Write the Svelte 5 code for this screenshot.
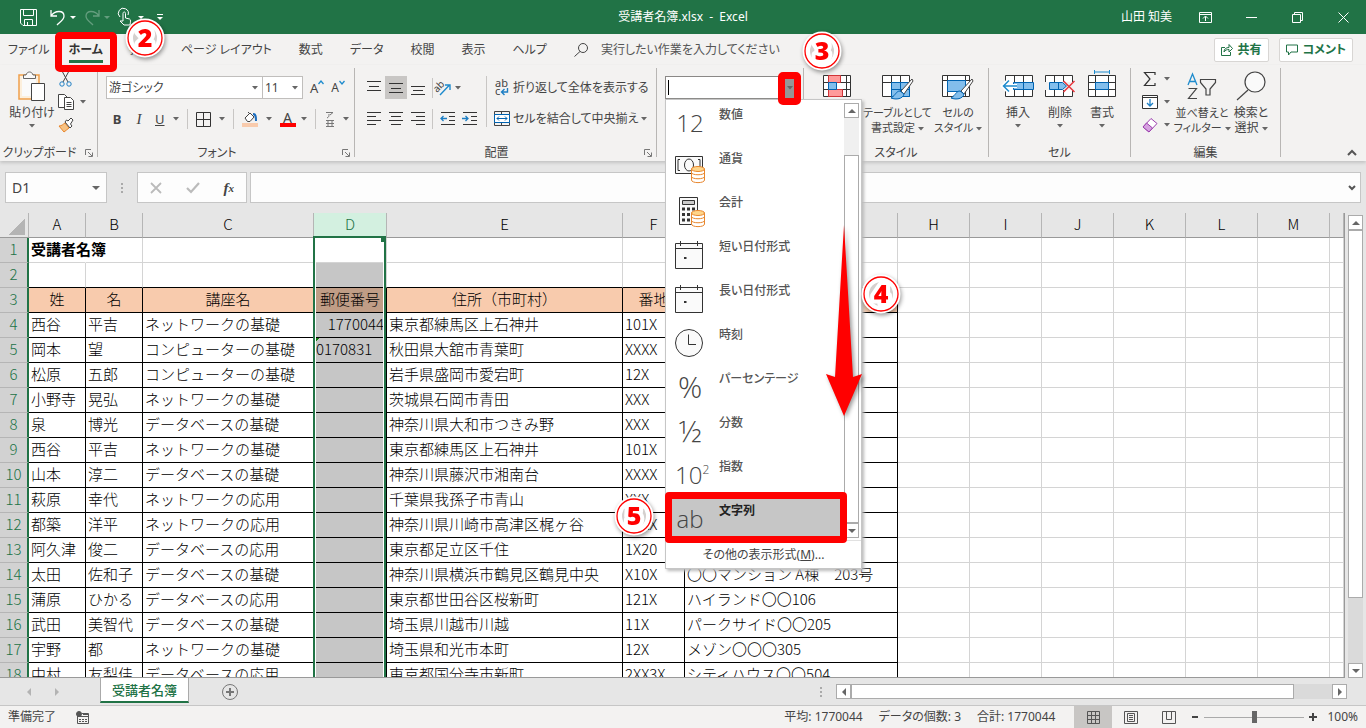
<script lang="ts">
	const tabs = ['ファイル', 'ホーム', '挿入', 'ページ レイアウト', '数式', 'データ', '校閲', '表示', 'ヘルプ'];

	// the last column has no width and takes what is left of the window
	const columns = [
		{ name: 'A', width: 57 },
		{ name: 'B', width: 57 },
		{ name: 'C', width: 171 },
		{ name: 'D', width: 73 },
		{ name: 'E', width: 236 },
		{ name: 'F', width: 62 },
		{ name: 'G', width: 213 },
		...['H', 'I', 'J', 'K', 'L', 'M'].map((name) => ({ name, width: 72 })),
		{ name: '', width: 0 }
	];

	const rows = [
		['受講者名簿'],
		[],
		['姓', '名', '講座名', '郵便番号', '住所（市町村）', '番地', ''],
		['西谷', '平吉', 'ネットワークの基礎', '1770044', '東京都練馬区上石神井', '101X', ''],
		['岡本', '望', 'コンピューターの基礎', '0170831', '秋田県大舘市青葉町', 'XXXX', ''],
		['松原', '五郎', 'コンピューターの基礎', '', '岩手県盛岡市愛宕町', '12X', ''],
		['小野寺', '晃弘', 'ネットワークの基礎', '', '茨城県石岡市青田', 'XXX', ''],
		['泉', '博光', 'データベースの基礎', '', '神奈川県大和市つきみ野', 'XXX', ''],
		['西谷', '平吉', 'ネットワークの基礎', '', '東京都練馬区上石神井', '101X', ''],
		['山本', '淳二', 'データベースの基礎', '', '神奈川県藤沢市湘南台', 'XXXX', ''],
		['萩原', '幸代', 'ネットワークの応用', '', '千葉県我孫子市青山', 'XXX', ''],
		['都築', '洋平', 'ネットワークの応用', '', '神奈川県川崎市高津区梶ヶ谷', 'XXXX', ''],
		['阿久津', '俊二', 'データベースの応用', '', '東京都足立区千住', '1X20', ''],
		['太田', '佐和子', 'データベースの基礎', '', '神奈川県横浜市鶴見区鶴見中央', 'X10X', '〇〇マンション A棟　203号'],
		['蒲原', 'ひかる', 'データベースの応用', '', '東京都世田谷区桜新町', '121X', 'ハイランド〇〇106'],
		['武田', '美智代', 'データベースの基礎', '', '埼玉県川越市川越', '11X', 'パークサイド〇〇205'],
		['宇野', '都', 'ネットワークの基礎', '', '埼玉県和光市本町', '12X', 'メゾン〇〇〇305'],
		['中村', '友梨佳', 'データベースの応用', '', '東京都国分寺市新町', '2XX3X', 'シティハウス〇〇504']
	];

	const formats = [
		{ label: '数値', icon: 'number' },
		{ label: '通貨', icon: 'currency' },
		{ label: '会計', icon: 'accounting' },
		{ label: '短い日付形式', icon: 'date' },
		{ label: '長い日付形式', icon: 'date' },
		{ label: '時刻', icon: 'time' },
		{ label: 'パーセンテージ', icon: 'percent' },
		{ label: '分数', icon: 'fraction' },
		{ label: '指数', icon: 'exponent' },
		{ label: '文字列', icon: 'text' }
	];
</script>

{#snippet caret()}
	<svg class="caret" width="6" height="4" viewBox="0 0 6 4"><path d="M0 0h6L3 3.5z" fill="#666" /></svg>
{/snippet}

{#snippet lines(a, b, c, d)}
	<svg width="14" height="14" viewBox="0 0 14 14" stroke="#333" fill="none"><path d={`${a}${b}${c}${d}`} /></svg>
{/snippet}

{#snippet launcher()}
	<button class="launcher" aria-label="詳細">
		<svg width="8" height="8" viewBox="0 0 8 8" stroke="#777" fill="none"><path d="M.5 6V.5H6M3 3l4 4M7.5 3.5v4h-4" /></svg>
	</button>
{/snippet}

{#snippet coins()}
	<g stroke="#e8862c" fill="#fff">
		<path d="M16.5 16v11c0 3.500 13 3.500 13 0V16z" />
		<path d="M16.500 19.500c0 3 13 3 13 0M16.500 23.500c0 3 13 3 13 0" fill="none" />
		<ellipse cx="23" cy="16" rx="6.500" ry="2.500" fill="#ffd58a" />
	</g>
{/snippet}

{#snippet badge(n, cls)}
	<svg class="badge {cls}" width="44" height="44" viewBox="0 0 44 44">
		<circle cx="22" cy="22" r="19.500" fill="#fff" />
		<circle cx="22" cy="22" r="12" fill="#d4d0ce" />
		<circle cx="22" cy="22" r="17" fill="none" stroke="#f00" stroke-width="1.300" />
		<text x="22" y="31" text-anchor="middle">{n}</text>
	</svg>
{/snippet}

{#snippet brush()}
	<path d="M30 8L19 20l3 3L31 10z" fill="#fff" stroke="#444" />
	<path d="M18 20c-4 0-4 4-9 7 5 2 12 1 13-4z" fill="#83beec" stroke="#0063b1" />
{/snippet}

<div class="excel">
	<header class="titlebar">
		<div class="quick">
			<button class="save" aria-label="上書き保存">
				<svg width="17" height="17" viewBox="0 0 17 17" stroke="#fff" fill="none"><path d="M.5.5h16v16H3l-2.500-2.500zM3.500.5v6h10v-6M4.500 16.500v-6h8v6M7.500 13v3.500" /></svg>
			</button>
			<button class="undo" aria-label="元に戻す">
				<svg width="16" height="17" viewBox="0 0 16 17" stroke="#fff" stroke-width="1.300" fill="none"><path d="M1 1v6h6M1 7c4-6 13-6 13 0 0 4-4 6-7 9" /></svg>
				<i></i>
			</button>
			<button class="undo faded" aria-label="やり直し">
				<svg width="16" height="17" viewBox="0 0 16 17" stroke="#fff" stroke-width="1.300" fill="none"><path d="M15 1v6H9M15 7C11 1 2 1 2 7c0 4 4 6 7 9" /></svg>
				<i></i>
			</button>
			<button class="undo" aria-label="タッチ/マウス モードの切り替え">
				<svg width="16" height="17" viewBox="0 0 16 17" stroke="#fff" fill="none"><path d="M2 8a5 5 0 1 1 8-2M5 12V4.500c0-2 2.500-2 2.500 0V9l4 1c1.500.5 1 3 .5 6H6l-4-4z" /></svg>
				<i></i>
			</button>
			<button class="more" aria-label="クイック アクセス ツール バーのユーザー設定"><i></i></button>
		</div>
		<div class="title">受講者名簿.xlsx&nbsp; -&nbsp; Excel</div>
		<div class="window">
			<span>山田 知美</span>
			<button aria-label="リボンの表示オプション">
				<svg width="13" height="11" viewBox="0 0 13 11" stroke="#fff" fill="none"><path d="M.5.5h12v10H.5zM.5 2.500h12M6.500 9V4.500M4 6.500l2.500-2.500L9 6.500" /></svg>
			</button>
			<button aria-label="最小化"><svg width="11" height="11" viewBox="0 0 11 11" stroke="#fff"><path d="M0 5.500h11" /></svg></button>
			<button aria-label="元に戻す (縮小)"><svg width="11" height="11" viewBox="0 0 11 11" stroke="#fff" fill="none"><path d="M.5 2.500h8v8h-8zM2.500 2.500v-2h8v8h-2" /></svg></button>
			<button aria-label="閉じる"><svg width="11" height="11" viewBox="0 0 11 11" stroke="#fff"><path d="M.5.5l10 10M10.500.5l-10 10" /></svg></button>
		</div>
	</header>

	<nav class="tabs">
		{#each tabs as tab, i}
			<button class="tab" class:active={i === 1}>{tab}</button>
		{/each}
		<label class="tellme">
			<svg width="15" height="15" viewBox="0 0 15 15" stroke="#444" fill="none"><circle cx="9" cy="6" r="4.500" /><path d="M6 9.500L.5 14.500" /></svg>
			<input type="text" placeholder="実行したい作業を入力してください" aria-label="操作アシスト" />
		</label>
		<button class="pill">
			<svg width="12" height="12" viewBox="0 0 12 12" stroke="#217346" fill="none"><path d="M4 3.500H.5v8h9V8M3 8c0-3 2-4.500 5-4.500v-3l3.500 4L8 8V5.500C6 5.500 4 6 3 8z" /></svg>
			共有
		</button>
		<button class="pill">
			<svg width="12" height="12" viewBox="0 0 12 12" stroke="#217346" fill="none"><path d="M.5 1h11v7H5l-2.500 3V8h-2z" /></svg>
			コメント
		</button>
	</nav>

	<div class="ribbon">
		<section class="group clipboard">
			<div class="body">
				<button class="big paste">
					<svg width="28" height="30" viewBox="0 0 28 30" fill="none"><path d="M1 4h20v24H1z" fill="#fcefdc" stroke="#f0a04b" stroke-width="1.500" /><path d="M4 6h14v19H4z" fill="#fafafa" /><path d="M5.500 7.500V4H8c1-4 6-4 7 0h2.500v3.500z" fill="#fafafa" stroke="#666" /><path d="M13.500 12.500h13v17h-13z" fill="#fff" stroke="#444" /></svg>
					<span>貼り付け</span>
					{@render caret()}
				</button>
				<div class="stack">
					<button aria-label="切り取り"><svg width="16" height="16" viewBox="0 0 16 16" fill="none"><path d="M4 0l6 11M11 0L5 11" stroke="#444" /><circle cx="4" cy="13" r="2.200" stroke="#1e7fc4" /><circle cx="11" cy="13" r="2.200" stroke="#1e7fc4" /></svg></button>
					<button aria-label="コピー"><svg width="16" height="16" viewBox="0 0 16 16" stroke="#444" fill="#fff"><path d="M.5.5h6l3 3v10h-9z" /><path d="M6.500 3.500h6l3 3v9h-9zM8.500 8.500h5M8.500 10.500h5M8.500 12.500h5" /></svg>{@render caret()}</button>
					<button aria-label="書式のコピー/貼り付け"><svg width="16" height="16" viewBox="0 0 16 16"><path d="M1 9c3 0 4-2 6-3l4 5c-2 1-3 3-5 4z" fill="#f7c283" stroke="#e8862c" /><path d="M7 5l5 6 2-2-1.500-2L15 3l-2-2-3 3-1.500-1z" fill="#fff" stroke="#444" /></svg></button>
				</div>
			</div>
			<footer>クリップボード {@render launcher()}</footer>
		</section>

		<section class="group font">
			<div class="body column">
				<div class="line">
					<label class="combo name"><select aria-label="フォント"><option>游ゴシック</option></select>{@render caret()}</label>
					<label class="combo size"><select aria-label="フォント サイズ"><option>11</option></select>{@render caret()}</label>
					<button class="grow" aria-label="フォント サイズの拡大">A<svg width="6" height="5" viewBox="0 0 6 5" stroke="#1e8bcd" stroke-width="1.300" fill="none"><path d="M.5 4L3 1l2.500 3" /></svg></button>
					<button class="grow small" aria-label="フォント サイズの縮小">A<svg width="6" height="5" viewBox="0 0 6 5" stroke="#1e8bcd" stroke-width="1.300" fill="none"><path d="M.5 1L3 4l2.500-3" /></svg></button>
				</div>
				<div class="line styles">
					<button class="bold">B</button>
					<button class="italic">I</button>
					<button class="drop"><u>U</u>{@render caret()}</button>
					<hr />
					<button class="drop" aria-label="罫線"><svg width="15" height="15" viewBox="0 0 15 15" stroke="#333" fill="none"><path d="M.5.5h14v14H.5zM7.500 0v15M0 7.500h15" /></svg>{@render caret()}</button>
					<hr />
					<button class="drop" aria-label="塗りつぶしの色"><svg width="16" height="16" viewBox="0 0 16 16" fill="none"><path d="M0 12h16v4H0z" fill="#f8cbad" /><path d="M3 7l5-5 4 4-4 4.500H5.500zM6 1l2 2" stroke="#444" fill="#fff" /><path d="M11 3c3 0 3 3 3 7" stroke="#1e6fc0" stroke-width="2" /></svg>{@render caret()}</button>
					<button class="drop color"><span>A</span>{@render caret()}</button>
					<hr />
					<button class="drop ruby" aria-label="ふりがなの表示/非表示"><svg width="11" height="17" viewBox="0 0 11 17" stroke="#777" fill="none"><path d="M2 1.500h7L6 4M5 3c0 2 0 3-2 4M2 9.500h8M2 12.500h8M2 15.500h8M4 9v7M8 9v7" /></svg>{@render caret()}</button>
				</div>
			</div>
			<footer>フォント {@render launcher()}</footer>
		</section>

		<section class="group align">
			<div class="body">
				<div class="aligns">
					<div class="line">
						<button aria-label="上揃え">{@render lines('M0 .5h14', 'M2 5.500h10', 'M0 9.500h14', '')}</button>
						<button class="on" aria-label="上下中央揃え">{@render lines('M0 2.500h14', 'M2 7.500h10', 'M0 11.500h14', '')}</button>
						<button aria-label="下揃え">{@render lines('M0 5.500h14', 'M2 9.500h10', 'M0 13.500h14', '')}</button>
						<hr />
						<button class="orient" aria-label="方向"><svg width="17" height="16" viewBox="0 0 17 16" fill="none"><text x="0" y="10" font-size="10" fill="#444" transform="rotate(-45 5 8)">ab</text><path d="M6 15L15.500 5M11 5h5v5" stroke="#1e8bcd" stroke-width="1.400" /></svg>{@render caret()}</button>
					</div>
					<div class="line">
						<button aria-label="左揃え">{@render lines('M0 .5h14', 'M0 4.500h9', 'M0 8.500h14', 'M0 12.500h9')}</button>
						<button aria-label="中央揃え">{@render lines('M0 .5h14', 'M2 4.500h10', 'M0 8.500h14', 'M2 12.500h10')}</button>
						<button aria-label="右揃え">{@render lines('M0 .5h14', 'M5 4.500h9', 'M0 8.500h14', 'M5 12.500h9')}</button>
						<hr />
						<button aria-label="インデントを減らす"><svg width="15" height="14" viewBox="0 0 15 14" fill="none"><path d="M1 .5h14M9 4.500h6M9 8.500h6M1 12.500h14" stroke="#333" /><path d="M7 6.500H1M3.500 4L1 6.500 3.500 9" stroke="#1e7fc4" stroke-width="1.300" /></svg></button>
						<button aria-label="インデントを増やす"><svg width="15" height="14" viewBox="0 0 15 14" fill="none"><path d="M1 .5h14M9 4.500h6M9 8.500h6M1 12.500h14" stroke="#333" /><path d="M0 6.500h6M3.500 4L6 6.500 3.500 9" stroke="#1e7fc4" stroke-width="1.300" /></svg></button>
					</div>
				</div>
				<div class="wraps">
					<button>
						<svg width="16" height="17" viewBox="0 0 16 17" fill="none"><text x="1" y="8" font-size="11" fill="#444">ab</text><text x="1" y="16" font-size="11" fill="#444">c</text><path d="M13.500 9v4H8M10.500 10L7.500 13l3 3" stroke="#1e7fc4" stroke-width="1.400" /></svg>
						折り返して全体を表示する
					</button>
					<button>
						<svg width="16" height="15" viewBox="0 0 16 15" fill="none"><path d="M.5.5h15v14H.5zM7.500 0v3M7.500 12v3" stroke="#444" /><path d="M.5 3.500h15v8H.5z" fill="#fff" stroke="#0063b1" /><path d="M3 7.500h10M5 5.500l-2 2 2 2M11 5.500l2 2-2 2" stroke="#0063b1" /></svg>
						セルを結合して中央揃え {@render caret()}
					</button>
				</div>
			</div>
			<footer>配置 {@render launcher()}</footer>
		</section>

		<section class="group number">
			<div class="picker">
				<div class="field">
					<input type="text" aria-label="表示形式" />
					<button aria-label="表示形式の一覧">{@render caret()}</button>
				</div>
				<div class="menu">
					<div class="list">
						<ul>
							{#each formats as f, i}
								<li class:selected={i === 9}>
									<button>
										<span class="glyph" class:large={f.icon === 'percent' || f.icon === 'fraction'}>
											{#if f.icon === 'number'}
												12
											{:else if f.icon === 'percent'}
												%
											{:else if f.icon === 'fraction'}
												½
											{:else if f.icon === 'exponent'}
												10<sup>2</sup>
											{:else if f.icon === 'text'}
												ab
											{:else}
												<svg width="30" height="30" viewBox="0 0 30 30" stroke="#333" fill="#fafafa">
													{#if f.icon === 'currency'}
														<path d="M.5 3.500h27v17H.5z" /><path d="M5 6.500H3v11h2M23 6.500h2v11h-2" fill="none" /><ellipse cx="14" cy="12" rx="4.500" ry="6" />
														{@render coins()}
													{:else if f.icon === 'accounting'}
														<path d="M4.500.5h18v27h-18z" /><path d="M7.500 3.500h12v4h-12z" fill="#ccc" /><path d="M7 12h13M7 17.500h13M7 23h13" stroke-width="3" stroke-dasharray="3 2" />
														{@render coins()}
													{:else if f.icon === 'date'}
														<path d="M.5 2.500h27v25H.5zM.5 7.500h27M5.500 0v5M22.500 0v5" /><path d="M9 17h2.500" stroke-width="2" />
													{:else}
														<circle cx="14" cy="14" r="13.500" /><path d="M13.500 5.500v10H21" fill="none" />
													{/if}
												</svg>
											{/if}
										</span>
										<span class="label">{f.label}</span>
									</button>
								</li>
							{/each}
						</ul>
						<div class="bar">
							<button aria-label="上へ"><i class="up"></i></button>
							<div class="thumb"></div>
							<button aria-label="下へ"><i class="down"></i></button>
						</div>
					</div>
					<button class="other">その他の表示形式(<u>M</u>)...</button>
				</div>
			</div>
			<footer>数値</footer>
		</section>

		<section class="group looks">
			<div class="body">
				<button class="big">
					<svg width="28" height="30" viewBox="0 0 28 30" stroke="#333" fill="#fff"><path d="M.5 4.500h27v21H.5zM.5 11.500h27M.5 18.500h27M5.500 4v21M23.500 4v21" /><path d="M5.500 4.500h12v7h-12zM5.500 18.500h14v7h-14z" fill="#ff9a9a" stroke="#d13438" /><path d="M5.500 11.500h8v7h-8z" fill="#83beec" stroke="#0063b1" /></svg>
					<span>条件付き<br />書式 {@render caret()}</span>
				</button>
				<button class="big small">
					<svg width="32" height="30" viewBox="0 0 32 30" stroke="#333" fill="#fff"><path d="M.5 4.500h27v21H.5zM.5 11.500h27M9.500 4v21M18.500 4v21" /><path d="M9.500 11.500h18v14h-18zM18.500 11v14M9 18.500h18" fill="#83beec" stroke="#0063b1" />{@render brush()}</svg>
					<span>テーブルとして<br />書式設定 {@render caret()}</span>
				</button>
				<button class="big small">
					<svg width="32" height="30" viewBox="0 0 32 30" stroke="#333" fill="#fff"><path d="M.5 4.500h27v21H.5zM.5 9.500h27M5.500 4v21M23.500 4v21" /><path d="M5.500 9.500h18v11h-18z" fill="#83beec" stroke="#0063b1" />{@render brush()}</svg>
					<span>セルの<br />スタイル {@render caret()}</span>
				</button>
			</div>
			<footer>スタイル</footer>
		</section>

		<section class="group cells">
			<div class="body">
				<button class="big">
					<svg width="32" height="30" viewBox="0 0 32 30" stroke="#333" fill="#fff"><path d="M3.500 4.500h27v21h-27zM12.500 4v21M21.500 4v21" /><path d="M11.500 11.500h20v7h-20zM21.500 11v7" fill="#83beec" stroke="#0063b1" /><path d="M1 15h14M7 9l-6 6 6 6" fill="none" stroke="#fff" stroke-width="4" /><path d="M1 15h14M7 9.500L1.500 15 7 20.500" fill="none" stroke="#1e8bcd" stroke-width="1.500" /></svg>
					<span>挿入</span>
					{@render caret()}
				</button>
				<button class="big">
					<svg width="30" height="30" viewBox="0 0 30 30" stroke="#333" fill="#fff"><path d="M.5 4.500h27v21H.5zM9.500 4v21M18.500 4v21" /><path d="M0 11.500h28v7H0z" stroke="#f3f2f1" fill="#f3f2f1" /><path d="M4.500 11.500h13l4 3.500-4 3.500h-13zM13.500 11v7" fill="#83beec" stroke="#0063b1" /><path d="M18.500 10l11 11M29.500 10l-11 11" stroke="#e8373e" stroke-width="1.500" /></svg>
					<span>削除</span>
					{@render caret()}
				</button>
				<button class="big">
					<svg width="28" height="30" viewBox="0 0 28 30" stroke="#333" fill="#fff"><path d="M.5 4.500h27v21H.5zM.5 11.500h27M.5 18.500h27M7.500 4v21M20.500 4v21" /><path d="M7.500 11.500h13v7h-13z" fill="#83beec" stroke="#0063b1" /><path d="M6 1h16M6.500-1v4M21.500-1v4" stroke="#1e8bcd" /></svg>
					<span>書式</span>
					{@render caret()}
				</button>
			</div>
			<footer>セル</footer>
		</section>

		<section class="group edit">
			<div class="body">
				<div class="stack">
					<button aria-label="オート SUM"><svg width="16" height="16" viewBox="0 0 16 16" stroke="#333" stroke-width="1.200" fill="none"><path d="M13 4V1.500H2.500L8 8l-5.500 6.500H13V12" /></svg>{@render caret()}</button>
					<button aria-label="フィル"><svg width="16" height="16" viewBox="0 0 16 16" fill="none"><path d="M.5 1.500h15v13H.5zM.5 3.500h15" stroke="#333" fill="#fff" /><path d="M8 5v7M5 9l3 3 3-3" stroke="#1e7fc4" stroke-width="1.300" /></svg>{@render caret()}</button>
					<button aria-label="クリア"><svg width="16" height="16" viewBox="0 0 16 16" stroke="#9b3fae" fill="#fff"><path d="M1 10l8-8.500 6 5L7 15z" /><path d="M1 10l3.500-4 6 5L7 15z" fill="#d6a2e0" /></svg>{@render caret()}</button>
				</div>
				<button class="big small sort">
					<svg width="30" height="30" viewBox="0 0 30 30" fill="none"><path d="M1 14L5.500 3 10 14M2.500 10.500h6" stroke="#1e8bcd" stroke-width="1.300" /><path d="M1.500 17.500h8l-8 10h8.500M13.500 8.500h15v3L23 18v6h-4v-6l-5.500-6.500z" stroke="#444" stroke-width="1.200" /></svg>
					<span>並べ替えと<br />フィルター {@render caret()}</span>
				</button>
				<button class="big find">
					<svg width="30" height="30" viewBox="0 0 30 30" stroke="#444" stroke-width="1.200" fill="#fafafa"><path d="M12 19L1 29" /><circle cx="19" cy="11" r="10" /></svg>
					<span>検索と<br />選択 {@render caret()}</span>
				</button>
			</div>
			<footer>編集</footer>
		</section>
		<button class="collapse" aria-label="リボンを折りたたむ"><svg width="10" height="6" viewBox="0 0 10 6" stroke="#555" stroke-width="2" fill="none"><path d="M1 5l4-4 4 4" /></svg></button>
	</div>

	<div class="formula">
		<label class="namebox"><input type="text" value="D1" aria-label="名前ボックス" /><i class="down"></i></label>
		<span class="dots"></span>
		<div class="fx">
			<button aria-label="キャンセル"><svg width="12" height="12" viewBox="0 0 12 12" stroke="#bbb" stroke-width="1.800"><path d="M1 1l10 10M11 1L1 11" /></svg></button>
			<button aria-label="入力"><svg width="14" height="12" viewBox="0 0 14 12" stroke="#bbb" stroke-width="2.200" fill="none"><path d="M1 6l4 4 8-9" /></svg></button>
			<button class="fn">f<sub>x</sub></button>
		</div>
		<label class="entry">
			<input type="text" aria-label="数式バー" />
			<svg width="8" height="6" viewBox="0 0 8 6" stroke="#555" stroke-width="2" fill="none"><path d="M1 1l3 3 3-3" /></svg>
		</label>
	</div>

	<main class="sheet">
		<div class="viewport">
			<table>
				<colgroup>
					<col class="rowcol" />
					{#each columns as c}
						<col style:width={c.width ? `${c.width}px` : null} />
					{/each}
				</colgroup>
				<thead>
					<tr>
						<th class="corner"></th>
						{#each columns as c}
							<th class:picked={c.name === 'D'}>
								{c.name}
								{#if c.name === 'D'}<span class="outline"></span>{/if}
							</th>
						{/each}
					</tr>
				</thead>
				<tbody>
					{#each rows as row, r}
						<tr class:heading={r === 2}>
							<th>{r + 1}</th>
							{#each columns as c, i}
								<td
									class:ink={i < 7 && r > 1}
									class:over={i < 7 && r === 1}
									class:title-cell={r === 0 && i === 0}
									class:gray={i === 3 && r > 0}
									class:num={i === 3 && r === 3}
									class:flag={i === 3 && r === 4}
								>{row[i] ?? ''}</td>
							{/each}
						</tr>
					{/each}
				</tbody>
			</table>
		</div>
		<div class="vscroll">
			<button aria-label="上へスクロール"><i class="up"></i></button>
			<div class="track"><div class="thumb"></div></div>
			<button aria-label="下へスクロール"><i class="down"></i></button>
		</div>
	</main>

	<div class="sheetbar">
		<button class="nav" aria-label="前のシート"><i class="left"></i></button>
		<button class="nav" aria-label="次のシート"><i class="right"></i></button>
		<button class="sheettab">受講者名簿</button>
		<button class="add" aria-label="新しいシート"><svg width="16" height="16" viewBox="0 0 16 16" stroke="#777" fill="none"><circle cx="8" cy="8" r="7.500" /><path d="M8 4v8M4 8h8" stroke-width="2" /></svg></button>
		<span class="dots"></span>
		<div class="hscroll">
			<button aria-label="左へスクロール"><i class="left"></i></button>
			<div class="track"><div class="thumb"></div></div>
			<button aria-label="右へスクロール"><i class="right"></i></button>
		</div>
	</div>

	<footer class="status">
		<span>準備完了</span>
		<svg class="macro" width="13" height="13" viewBox="0 0 13 13" stroke="#555" fill="none"><path d="M1.500 5v7.500h11v-10H6M2 5.500h11M3 8.500h2M6 8.500h2M9 8.500h2M3 10.500h2M6 10.500h2M9 10.500h2M7 3.500h5" /><circle cx="3" cy="3" r="2.500" fill="#555" /></svg>
		<div class="sums">
			<span>平均: 1770044</span>
			<span>データの個数: 3</span>
			<span>合計: 1770044</span>
		</div>
		<button class="view on" aria-label="標準"><svg width="13" height="13" viewBox="0 0 13 13" stroke="#555" fill="none"><path d="M.5.5h12v12H.5zM4.500 0v13M8.500 0v13M0 4.500h13M0 8.500h13" /></svg></button>
		<button class="view" aria-label="ページ レイアウト"><svg width="14" height="13" viewBox="0 0 14 13" stroke="#555" fill="none"><path d="M.5.5h13v12H.5zM3.500 2.500h7v8h-7zM5 4.500h4M5 6.500h4M5 8.500h4" /></svg></button>
		<button class="view" aria-label="改ページ プレビュー"><svg width="14" height="13" viewBox="0 0 14 13" stroke="#555" fill="none"><path d="M.5.5h13v12H.5zM4.500 0v8.500h5V0" /></svg></button>
		<button class="zoom" aria-label="縮小"><svg width="8" height="8" viewBox="0 0 8 8" stroke="#444" stroke-width="2"><path d="M1 4h6" /></svg></button>
		<input type="range" min="0" max="100" value="50" aria-label="ズーム" />
		<button class="zoom" aria-label="拡大"><svg width="8" height="8" viewBox="0 0 8 8" stroke="#444" stroke-width="2"><path d="M0 4h8M4 0v8" /></svg></button>
		<span class="percent">100%</span>
	</footer>

	{@render badge(2, 'b2')}
	{@render badge(3, 'b3')}
	{@render badge(4, 'b4')}
	{@render badge(5, 'b5')}
	<svg class="arrow" width="40" height="196" viewBox="0 0 40 196"><path d="M20 0l9 152 9-3-18 42L2 149l9 3z" fill="#f00" /></svg>
</div>

<style>
	:global(body) {
		margin: 0;
		overflow: hidden;
	}

	.excel {
		position: relative;
		display: flex;
		flex-direction: column;
		height: 100vh;
		background: #e6e6e6;
		color: #444;
		font: 12px/16px 'Noto Sans', 'Noto Sans CJK JP', sans-serif;
		font-feature-settings: 'palt';
	}

	button,
	input,
	select {
		margin: 0;
		padding: 0;
		border: 0;
		background: none;
		color: inherit;
		font: inherit;
		font-feature-settings: inherit;
		outline: none;
		box-sizing: border-box;
	}

	button {
		display: flex;
		align-items: center;
		justify-content: center;
		white-space: nowrap;
	}

	svg {
		flex: none;
		overflow: visible;
	}

	hr {
		width: 1px;
		height: 20px;
		margin: 0;
		border: 0;
		background: #c8c6c4;
	}

	i {
		display: block;
		border: 4px solid transparent;
	}

	i.up {
		border-bottom-color: #666;
		border-top: 0;
	}

	i.down {
		border-top-color: #666;
		border-bottom: 0;
	}

	i.left {
		border-right-color: #666;
		border-left: 0;
	}

	i.right {
		border-left-color: #666;
		border-right: 0;
	}

	/* title bar */
	.titlebar {
		display: grid;
		grid-template-columns: 1fr auto 1fr;
		align-items: center;
		height: 34px;
		flex: none;
		background: #217346;
		color: #fff;
	}

	.quick {
		display: flex;
		align-items: center;
		gap: 8px;
		padding-left: 20px;
	}

	.save {
		margin-right: 5px;
	}

	.undo {
		gap: 4px;
	}

	.faded {
		opacity: 0.3;
	}

	.quick i {
		border-width: 3px;
		border-top-color: #fff;
		border-bottom: 0;
	}

	.more {
		border-top: 1px solid #fff;
		margin-left: 5px;
		padding-top: 2px;
	}

	.window {
		display: flex;
		justify-content: flex-end;
		align-items: center;
	}

	.window button {
		width: 46px;
		height: 34px;
	}

	.window span {
		margin-right: 10px;
	}

	/* tabs */
	.tabs {
		display: flex;
		align-items: center;
		height: 31px;
		flex: none;
		gap: 27px;
		padding: 0 13px 0 8px;
		background: #f3f2f1;
	}

	.tab {
		position: relative;
		height: 26px;
	}

	.tab:first-child {
		margin-right: -8px;
	}

	.tab.active {
		color: #333;
		font-weight: 700;
	}

	.tab.active::before {
		content: '';
		position: absolute;
		left: 0;
		right: 0;
		bottom: 0;
		height: 3px;
		background: #217346;
	}

	.tab.active::after {
		content: '';
		position: absolute;
		z-index: 3;
		inset: -5px -14px -9px;
		border: 7px solid #f00;
		border-radius: 5px;
	}

	.tellme {
		display: flex;
		align-items: center;
		flex: 1;
		gap: 12px;
	}

	.tellme input {
		width: 200px;
	}

	.tellme input::placeholder {
		color: #555;
	}

	.pill {
		gap: 5px;
		height: 24px;
		padding: 0 6px;
		border: 1px solid #d8d6d4;
		border-radius: 2px;
		background: #fff;
		color: #217346;
		font-weight: 700;
	}

	.pill + .pill {
		margin-left: -17px;
	}

	/* ribbon */
	.ribbon {
		display: flex;
		position: relative;
		height: 96px;
		flex: none;
		background: #f3f2f1;
		box-shadow: 0 2px 3px #c4c4c4;
	}

	.group {
		position: relative;
		display: flex;
		flex-direction: column;
		justify-content: space-between;
		flex: none;
		margin: 3px 0 4px;
		box-sizing: border-box;
		border-right: 1px solid #b8b6b4;
	}

	.group > footer {
		position: relative;
		height: 8px;
		text-align: center;
		line-height: 8px;
	}

	.launcher {
		position: absolute;
		right: 4px;
		bottom: 0;
	}

	.clipboard {
		width: 98px;
	}

	.clipboard > footer,
	.font > footer,
	.align > footer {
		padding-right: 18px;
	}

	.font {
		width: 257px;
	}

	.align {
		width: 302px;
	}

	.number {
		width: 147px;
	}

	.looks {
		width: 185px;
	}

	.cells {
		width: 142px;
	}

	.edit {
		width: 150px;
	}

	.body {
		display: flex;
	}

	.column {
		flex-direction: column;
		gap: 9px;
		padding: 8px 0 0 8px;
	}

	.line {
		display: flex;
		align-items: center;
	}

	.big {
		flex-direction: column;
		justify-content: flex-start;
		padding-top: 3px;
		line-height: 15px;
	}

	.big span {
		margin: 4px 0;
	}

	.big span .caret {
		vertical-align: middle;
	}

	.small {
		font-size: 11px;
	}

	.paste {
		width: 42px;
		margin-left: 11px;
	}

	.stack {
		display: flex;
		flex-direction: column;
		gap: 7px;
		padding: 3px 0 0 5px;
	}

	.stack button {
		justify-content: flex-start;
		gap: 6px;
	}

	.combo {
		position: relative;
		height: 23px;
		box-sizing: border-box;
		border: 1px solid #c0bebc;
		background: #fff;
	}

	.combo select {
		width: 100%;
		height: 21px;
		padding-left: 2px;
		appearance: none;
	}

	.combo .caret {
		position: absolute;
		right: 4px;
		top: 9px;
	}

	.name {
		width: 157px;
	}

	.size {
		width: 41px;
		margin-left: -1px;
	}

	.grow {
		align-items: flex-start;
		margin-left: 7px;
		font-size: 13px;
	}

	.grow.small {
		font-size: 12px;
	}

	.styles {
		height: 22px;
		gap: 8px;
		padding-left: 7px;
		font-size: 13px;
	}

	.bold {
		width: 8px;
		margin-right: 5px;
		font-weight: 700;
	}

	.italic {
		width: 10px;
		margin-right: 3px;
		font-style: italic;
		font-family: 'Liberation Serif', serif;
		font-size: 15px;
	}

	.drop {
		gap: 8px;
	}

	.color {
		gap: 5px;
		line-height: 12px;
	}

	.color span {
		width: 16px;
		height: 16px;
		line-height: 14px;
		font-size: 14px;
		border-bottom: 4px solid #f00;
		box-sizing: border-box;
	}

	.aligns {
		display: flex;
		flex-direction: column;
		gap: 8px;
		padding: 8px 0 0 8px;
	}

	.aligns .line {
		height: 23px;
	}

	.aligns .line button {
		width: 22px;
		height: 23px;
	}

	.aligns hr {
		margin: 0 3px;
	}

	.aligns .orient {
		width: 34px;
		gap: 4px;
	}

	.on {
		background: #c8c6c4;
	}

	.wraps {
		display: flex;
		flex-direction: column;
		align-items: flex-start;
		gap: 14px;
		margin: 8px 0 4px 6px;
		padding: 3px 0 0 7px;
		border-left: 1px solid #c8c6c4;
	}

	.wraps button {
		gap: 3px;
		height: 17px;
	}

	/* number format picker */
	.picker {
		position: relative;
		margin: 8px 2px 0 8px;
	}

	.field {
		display: flex;
		height: 23px;
		border: 1px solid #8a8886;
		background: #fff;
		box-sizing: border-box;
	}

	.field input {
		flex: 1;
		min-width: 0;
		border-left: 1px solid #000;
		margin: 3px 0 3px 2px;
	}

	.field button {
		position: relative;
		width: 9px;
		margin: 1px 6px 0 0;
		background: #969696;
	}

	.field button::after {
		content: '';
		position: absolute;
		z-index: 3;
		inset: -6px -7px -7px;
		border: 7px solid #f00;
		border-radius: 5px;
	}

	.menu {
		position: absolute;
		z-index: 2;
		top: 23px;
		left: 0;
		width: 195px;
		border: 1px solid #c6c6c6;
		background: #fff;
		box-shadow: 2px 2px 3px #bbb;
	}

	.list {
		display: flex;
		border-bottom: 1px solid #e1e1e1;
	}

	ul {
		flex: 1;
		margin: 0;
		padding: 0;
		list-style: none;
	}

	li {
		position: relative;
	}

	li button {
		align-items: flex-start;
		justify-content: flex-start;
		gap: 14px;
		width: 100%;
		height: 44px;
		padding: 7px 0 0 9px;
		color: #555;
		font-weight: 500;
	}

	.glyph {
		width: 30px;
		color: #444;
		text-align: center;
		font: 300 24px/32px 'Open Sans', 'Noto Sans', sans-serif;
	}

	.glyph.large {
		font-size: 30px;
	}

	.glyph svg {
		display: block;
		margin-top: 2px;
	}

	sup {
		font-size: 12px;
		line-height: 0;
		vertical-align: 10px;
	}

	.selected {
		background: #c6c6c6;
	}

	.selected button {
		color: #222;
		font-weight: 700;
	}

	.selected::after {
		content: '';
		position: absolute;
		inset: -4px -3px -3px -1px;
		border: 7px solid #f00;
		border-radius: 4px;
	}

	.bar {
		display: flex;
		flex-direction: column;
		width: 15px;
		margin: 3px 2px 2px 0;
		background: #f0f0f0;
	}

	.bar button,
	.vscroll button,
	.hscroll button {
		flex: none;
		width: 15px;
		height: 15px;
		border: 1px solid #ababab;
		background: #fff;
	}

	.bar .thumb {
		flex: 1;
		margin-top: 37px;
		border: 1px solid #ababab;
		background: #fff;
	}

	.other {
		width: 100%;
		height: 27px;
	}

	.looks .big {
		width: 61px;
	}

	.looks .body {
		padding-left: 3px;
	}

	.cells .body {
		padding-left: 8px;
	}

	.cells .big {
		width: 42px;
	}

	.edit .stack {
		width: 34px;
		padding-left: 11px;
	}

	.sort {
		width: 52px;
	}

	.find {
		width: 46px;
	}

	.collapse {
		margin: auto 9px 5px auto;
	}

	/* formula bar */
	.formula {
		display: flex;
		align-items: center;
		height: 31px;
		flex: none;
		margin: 11px 5px 10px;
		font-size: 14px;
	}

	.namebox,
	.fx,
	.entry {
		display: flex;
		align-items: center;
		height: 31px;
		box-sizing: border-box;
		border: 1px solid #c6c6c6;
		background: #fdfdfd;
	}

	.namebox {
		width: 102px;
		padding: 0 6px;
	}

	.namebox input,
	.entry input {
		flex: 1;
		min-width: 0;
	}

	.dots {
		width: 2px;
		height: 10px;
		margin: 0 14px;
		background: repeating-linear-gradient(#aaa 0 2px, transparent 2px 4px);
	}

	.fx {
		width: 110px;
		justify-content: space-around;
	}

	.fn {
		font: italic 700 15px/16px 'Liberation Serif', serif;
	}

	.fn sub {
		font-size: 11px;
	}

	.entry {
		flex: 1;
		margin-left: 3px;
		padding-right: 4px;
	}

	/* sheet */
	.sheet {
		display: flex;
		flex: 1;
		min-height: 0;
		font-feature-settings: normal;
	}

	.viewport {
		flex: 1;
		overflow: hidden;
		border-right: 1px solid #999;
		border-bottom: 1px solid #999;
	}

	table {
		width: 100%;
		table-layout: fixed;
		border-collapse: separate;
		border-spacing: 0;
		background: #fff;
		color: #000;
		font: 300 15px/20px 'Noto Sans CJK JP', sans-serif;
	}

	.rowcol {
		width: 29px;
	}

	th,
	td {
		height: 25px;
		padding: 0 2px 2px;
		box-sizing: border-box;
		border-right: 1px solid #d4d4d4;
		border-bottom: 1px solid #d4d4d4;
		overflow: hidden;
		white-space: nowrap;
		text-align: left;
	}

	th {
		font-weight: 300;
		text-align: center;
	}

	thead th {
		background: #e6e6e6;
		border-right-color: #b5b5b5;
		border-bottom-color: #999;
	}

	.corner {
		background: linear-gradient(135deg, transparent 50%, #b4b4b4 50%) 8px 6px / 17px 16px no-repeat #e6e6e6;
	}

	tbody th {
		background: #d2d2d2;
		border-right: 2px solid #217346;
		border-bottom-color: #b5b5b5;
		color: #217346;
	}

	thead .picked {
		position: relative;
		overflow: visible;
		background: #d3f0e0;
		color: #217346;
	}

	.outline {
		position: absolute;
		top: 23px;
		left: -1px;
		right: 0;
		height: 2000px;
		border: 2px solid #217346;
		box-shadow: inset 0 0 0 1px #fff;
		pointer-events: none;
	}

	.outline::after {
		content: '';
		position: absolute;
		top: -1px;
		right: -2px;
		width: 5px;
		height: 5px;
		background: #217346;
	}

	.ink {
		border-color: #000;
	}

	.over {
		border-bottom-color: #000;
	}

	.title-cell {
		overflow: visible;
		border-right-color: transparent;
		font-weight: 700;
	}

	.heading .ink {
		background: #f8cbad;
		text-align: center;
	}

	.gray {
		background: #c6c6c6;
	}

	.heading .gray {
		background: #c09d86;
	}

	.num {
		text-align: right;
	}

	.flag {
		background: linear-gradient(135deg, #107c10 4px, transparent 4px) #c6c6c6;
	}

	.vscroll {
		display: flex;
		flex-direction: column;
		width: 15px;
		margin: 2px 3px 0;
	}

	.track {
		flex: 1;
		background: #dadada;
	}

	.vscroll .thumb {
		height: 85%;
		box-sizing: border-box;
		border: 1px solid #ababab;
		background: #fff;
	}

	/* sheet tabs */
	.sheetbar {
		display: flex;
		align-items: center;
		height: 27px;
		flex: none;
		border-bottom: 1px solid #c6c6c6;
	}

	.nav {
		width: 28px;
		opacity: 0.4;
	}

	.nav:first-child {
		margin-left: 15px;
	}

	.sheettab {
		align-self: flex-start;
		width: 89px;
		height: 25px;
		margin-left: 29px;
		border: 1px solid #aaa;
		border-top: 0;
		border-bottom: 2px solid #217346;
		background: #fff;
		color: #217346;
		font-size: 13px;
		font-weight: 500;
	}

	.add {
		margin: 0 auto 0 33px;
	}

	.hscroll {
		display: flex;
		width: 38%;
		max-width: 511px;
		margin-right: 19px;
	}

	.hscroll .thumb {
		width: 92%;
		height: 15px;
		box-sizing: border-box;
		border: 1px solid #ababab;
		background: #fff;
	}

	/* status bar */
	.status {
		display: flex;
		align-items: center;
		height: 22px;
		flex: none;
		padding: 0 8px;
		background: #f3f2f1;
	}

	.macro {
		margin-left: 20px;
	}

	.sums {
		display: flex;
		gap: 16px;
		margin: 0 19px 0 auto;
	}

	.view {
		width: 38px;
		height: 22px;
	}

	.zoom {
		width: 10px;
		margin-left: 2px;
	}

	.status input {
		width: 100px;
		height: 16px;
		margin: 0 2px 0 4px;
		appearance: none;
		background: linear-gradient(#aaa, #aaa) center / 100% 1px no-repeat;
	}

	.status input::-webkit-slider-thumb {
		appearance: none;
		width: 5px;
		height: 12px;
		background: #666;
	}

	.percent {
		margin-left: 9px;
	}

	/* step markers */
	.badge {
		position: absolute;
		z-index: 4;
		filter: drop-shadow(1px 2px 2px rgba(0, 0, 0, 0.4));
	}

	.badge text {
		fill: #f00;
		stroke: #fff;
		stroke-width: 8px;
		stroke-linejoin: round;
		paint-order: stroke;
		font: 800 25px 'Open Sans', 'Noto Sans', sans-serif;
	}

	.b2 {
		left: 123px;
		top: 16px;
	}

	.b3 {
		left: 800px;
		top: 29px;
	}

	.b4 {
		left: 859px;
		top: 272px;
	}

	.b5 {
		left: 612px;
		top: 494px;
	}

	.arrow {
		position: absolute;
		z-index: 4;
		left: 824px;
		top: 225px;
		filter: drop-shadow(2px 2px 2px rgba(0, 0, 0, 0.4));
	}
</style>
